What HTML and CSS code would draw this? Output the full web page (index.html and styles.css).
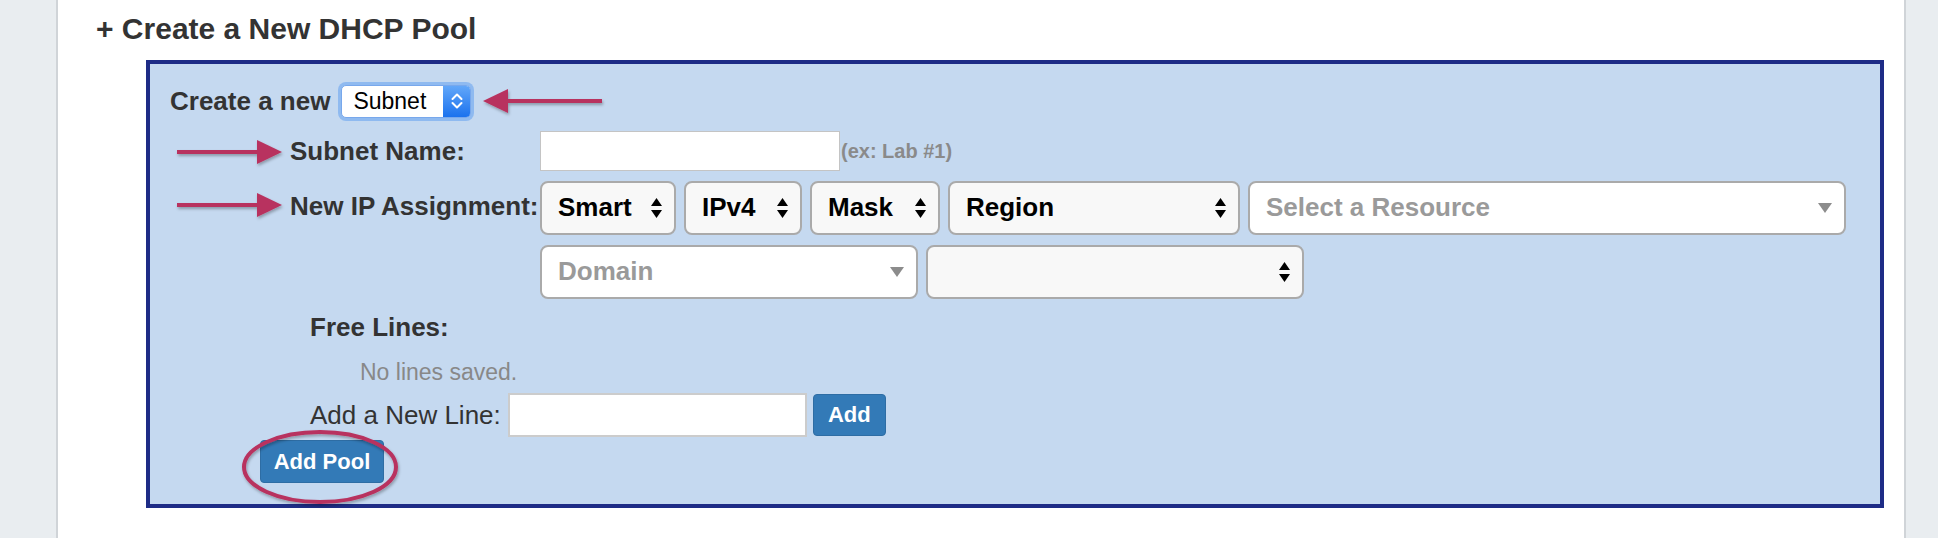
FILE: index.html
```html
<!DOCTYPE html>
<html lang="en">
<head>
<meta charset="utf-8">
<title>Create a New DHCP Pool</title>
<link rel="stylesheet" href="styles.css">
</head>
<body>
<div class="page">
  <aside class="gutter gutter-left"></aside>
  <main class="main">
    <h2 class="title">+ Create a New DHCP Pool</h2>
    <section class="pool-box">
      <div class="create-row">
        <span class="create-label">Create a new</span>
        <span class="mac-select">
          <span class="mac-value">Subnet</span>
          <span class="mac-stepper">
            <svg width="12" height="20" viewBox="0 0 12 20"><polyline points="1.5,8 6,3.5 10.5,8" fill="none" stroke="#fff" stroke-width="2" stroke-linecap="round" stroke-linejoin="round"/><polyline points="1.5,12 6,16.5 10.5,12" fill="none" stroke="#fff" stroke-width="2" stroke-linecap="round" stroke-linejoin="round"/></svg>
          </span>
        </span>
      </div>

      <div class="form-grid">
        <div class="label name-label">Subnet Name:</div>
        <div class="name-field">
          <input class="text-input" type="text">
          <span class="hint">(ex: Lab #1)</span>
        </div>

        <div class="label ip-label">New IP Assignment:</div>
        <div class="ip-field">
          <div class="sel-row">
            <div class="sel w-smart"><span>Smart</span><svg class="updown" width="11" height="22" viewBox="0 0 11 22"><polygon points="0,9 5.5,1 11,9"/><polygon points="0,13 5.5,21 11,13"/></svg></div>
            <div class="sel w-ipv4"><span>IPv4</span><svg class="updown" width="11" height="22" viewBox="0 0 11 22"><polygon points="0,9 5.5,1 11,9"/><polygon points="0,13 5.5,21 11,13"/></svg></div>
            <div class="sel w-mask"><span>Mask</span><svg class="updown" width="11" height="22" viewBox="0 0 11 22"><polygon points="0,9 5.5,1 11,9"/><polygon points="0,13 5.5,21 11,13"/></svg></div>
            <div class="sel w-region"><span>Region</span><svg class="updown" width="11" height="22" viewBox="0 0 11 22"><polygon points="0,9 5.5,1 11,9"/><polygon points="0,13 5.5,21 11,13"/></svg></div>
            <div class="sel sel-chosen w-resource"><span>Select a Resource</span><svg class="caret" width="14" height="10" viewBox="0 0 14 10"><polygon points="0,0 14,0 7,10"/></svg></div>
          </div>
          <div class="sel-row">
            <div class="sel sel-chosen w-domain"><span>Domain</span><svg class="caret" width="14" height="10" viewBox="0 0 14 10"><polygon points="0,0 14,0 7,10"/></svg></div>
            <div class="sel sel-empty w-blank"><span></span><svg class="updown" width="11" height="22" viewBox="0 0 11 22"><polygon points="0,9 5.5,1 11,9"/><polygon points="0,13 5.5,21 11,13"/></svg></div>
          </div>
        </div>
      </div>

      <div class="free-lines">
        <div class="free-title">Free Lines:</div>
        <div class="free-empty">No lines saved.</div>
        <div class="free-add">
          <span class="free-add-label">Add a New Line:</span>
          <input class="line-input" type="text">
          <button class="btn btn-add" type="button">Add</button>
        </div>
      </div>

      <button class="btn btn-pool" type="button">Add Pool</button>
    </section>
  </main>
  <aside class="gutter gutter-right"></aside>

  <svg class="annotations" width="1938" height="538" viewBox="0 0 1938 538">
    <defs>
      <filter id="shadow" x="-20%" y="-50%" width="140%" height="200%">
        <feDropShadow dx="1" dy="2" stdDeviation="1.5" flood-color="#000" flood-opacity="0.3"/>
      </filter>
    </defs>
    <g fill="#b8325e" filter="url(#shadow)">
      <rect x="505" y="99" width="97" height="4"/>
      <polygon points="483,101 508,89 508,113"/>
      <rect x="177" y="150" width="82" height="4"/>
      <polygon points="282,152 257,140 257,164"/>
      <rect x="177" y="203" width="82" height="4"/>
      <polygon points="282,205 257,193 257,217"/>
    </g>
    <ellipse cx="320" cy="467" rx="76" ry="35" fill="none" stroke="#b8325e" stroke-width="4" filter="url(#shadow)"/>
  </svg>
</div>
</body>
</html>
```

FILE: styles.css
```css
html, body {
  margin: 0;
  padding: 0;
}

body {
  font-family: "Liberation Sans", Arial, Helvetica, sans-serif;
  color: #333;
  background: #fff;
}

.page {
  position: relative;
  display: flex;
  width: 1938px;
  height: 538px;
  overflow: hidden;
}

.gutter {
  background: #e9edf0;
}

.gutter-left {
  width: 56px;
  border-right: 2px solid #d0d4d8;
}

.gutter-right {
  width: 32px;
  border-left: 2px solid #d0d4d8;
}

.main {
  flex: 1;
  background: #fff;
}

.title {
  margin: 0;
  padding: 11px 0 0 38px;
  font-size: 30px;
  line-height: 36px;
  font-weight: bold;
  color: #333;
}

.pool-box {
  margin: 13px 20px 0 88px;
  border: 4px solid #1e2c86;
  background: #c5d9f0;
  padding: 18px 0 21px 20px;
}

/* Create a new row */
.create-row {
  display: flex;
  align-items: center;
  height: 38px;
}

.create-label {
  font-size: 26px;
  font-weight: bold;
  line-height: 30px;
}

.mac-select {
  display: inline-flex;
  margin-left: 11px;
  width: 130px;
  height: 33px;
  box-sizing: border-box;
  border: 1px solid #78a8ec;
  border-radius: 5px;
  background: #fff;
  box-shadow: 0 0 0 3px #8fbaf0;
  overflow: hidden;
}

.mac-value {
  flex: 1;
  padding-left: 11px;
  font-size: 23px;
  line-height: 31px;
  color: #000;
}

.mac-stepper {
  width: 27px;
  display: flex;
  align-items: center;
  justify-content: center;
  background: linear-gradient(#62a7f9, #1b72ee);
}

/* Form grid */
.form-grid {
  display: grid;
  grid-template-columns: 250px auto;
  row-gap: 10px;
  margin: 11px 0 0 120px;
}

.label {
  font-size: 26px;
  font-weight: bold;
  line-height: 30px;
  white-space: nowrap;
  color: #333;
}

.name-label {
  align-self: center;
}

.name-field {
  display: flex;
  align-items: center;
}

.text-input {
  width: 300px;
  height: 40px;
  box-sizing: border-box;
  margin: 0;
  padding: 0;
  border: 1px solid #c4c4c4;
  background: #fff;
  outline: none;
}

.hint {
  margin-left: 1px;
  font-size: 20px;
  font-weight: bold;
  color: #8a8a8a;
}

.ip-label {
  align-self: start;
  padding-top: 10px;
}

.ip-field {
  display: flex;
  flex-direction: column;
  gap: 10px;
}

.sel-row {
  display: flex;
  gap: 8px;
}

.sel {
  height: 54px;
  box-sizing: border-box;
  border: 2px solid #aaa;
  border-radius: 8px;
  background: #f8f8f8;
  display: flex;
  align-items: center;
  justify-content: space-between;
  padding: 0 12px 3px 16px;
  font-size: 26px;
  font-weight: bold;
  line-height: 30px;
  color: #000;
  white-space: nowrap;
}

.sel .updown {
  fill: #000;
  flex: none;
  margin-top: 2px;
}

.sel-chosen {
  background: #fff;
  color: #9a9a9a;
  padding-right: 12px;
}

.sel .caret {
  fill: #8c8c8c;
  flex: none;
  margin-top: 2px;
}

.w-smart { width: 136px; }
.w-ipv4 { width: 118px; }
.w-mask { width: 130px; }
.w-region { width: 292px; }
.w-resource { width: 598px; }
.w-domain { width: 378px; }
.w-blank { width: 378px; }

/* Free lines */
.free-lines {
  margin: 13px 0 0 140px;
}

.free-title {
  font-size: 26px;
  font-weight: bold;
  line-height: 30px;
}

.free-empty {
  margin: 17px 0 0 50px;
  font-size: 23px;
  line-height: 26px;
  color: #888;
}

.free-add {
  display: flex;
  align-items: center;
  height: 44px;
  margin-top: 8px;
}

.free-add-label {
  font-size: 26px;
  line-height: 30px;
  color: #333;
}

.line-input {
  width: 299px;
  height: 44px;
  box-sizing: border-box;
  margin: 0 0 0 7px;
  padding: 0;
  border: 2px solid #cccccc;
  background: #fff;
  outline: none;
}

.btn {
  font-family: inherit;
  font-weight: bold;
  color: #fff;
  background: #337ab7;
  border: 1px solid #2e6da4;
  border-radius: 4px;
  padding: 0;
  margin: 0;
  cursor: pointer;
}

.btn-add {
  width: 73px;
  height: 42px;
  margin-left: 6px;
  font-size: 22px;
}

.btn-pool {
  display: block;
  width: 124px;
  height: 43px;
  margin: 3px 0 0 90px;
  font-size: 22px;
}

.annotations {
  position: absolute;
  left: 0;
  top: 0;
  pointer-events: none;
}
```
